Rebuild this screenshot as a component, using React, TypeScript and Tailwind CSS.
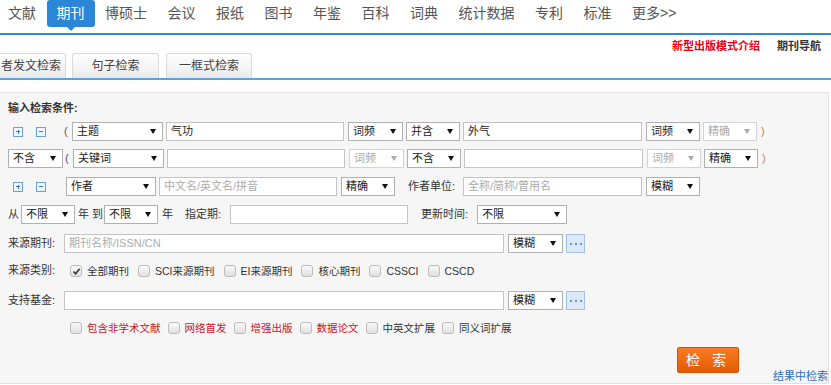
import React from "react";

const FONT = "font-['Liberation_Sans','Noto_Sans_CJK_SC',sans-serif]";

function Sel({ className = "", text, disabled = false }: { className?: string; text: string; disabled?: boolean }) {
  return (
    <div
      className={`flex h-[19px] shrink-0 items-center justify-between border bg-white pl-[4px] pr-[6px] ${
        disabled ? "border-[#d4d4d4] text-[#a9a9a9]" : "border-[#b0b0b0] text-[#222]"
      } ${className}`}
    >
      <span className="text-[11px] leading-[17px]">{text}</span>
      <svg width="6" height="5" viewBox="0 0 6 5">
        <path d="M0 0h6L3 5z" fill={disabled ? "#a9a9a9" : "#111"} />
      </svg>
    </div>
  );
}

function Inp({ className = "", text = "", placeholder = "" }: { className?: string; text?: string; placeholder?: string }) {
  return (
    <div
      className={`h-[19px] shrink-0 overflow-hidden whitespace-nowrap border border-[#c4c4c4] bg-white pl-[4px] text-[11px] leading-[17px] ${
        text ? "text-[#222]" : "text-[#ababab]"
      } ${className}`}
    >
      {text || placeholder}
    </div>
  );
}

function PlusMinus({ plus, className = "" }: { plus: boolean; className?: string }) {
  return (
    <div className={`relative h-[10px] w-[10px] shrink-0 border border-[#6b9fd6] bg-[#eef5fc] ${className}`}>
      <div className="absolute left-[2px] top-[3.5px] h-px w-[4px] bg-[#3b78c2]" />
      {plus && <div className="absolute left-[3.5px] top-[2px] h-[4px] w-px bg-[#3b78c2]" />}
    </div>
  );
}

function Dots({ className = "" }: { className?: string }) {
  return (
    <div
      className={`flex h-[19px] w-[19px] shrink-0 items-center justify-center gap-[3px] border border-[#9fc2e8] bg-[#dde9f8] ${className}`}
    >
      <span className="h-[2px] w-[2px] bg-[#5f9bd8]" />
      <span className="h-[2px] w-[2px] bg-[#5f9bd8]" />
      <span className="h-[2px] w-[2px] bg-[#5f9bd8]" />
    </div>
  );
}

function Check({ checked = false }: { checked?: boolean }) {
  return (
    <div className="relative h-[12px] w-[12px] shrink-0 rounded-[3px] border border-[#bcbcbc] bg-gradient-to-b from-[#fafafa] to-[#e0e0e0]">
      {checked && (
        <svg className="absolute left-[1px] top-[1px]" width="9" height="9" viewBox="0 0 9 9">
          <path d="M1.5 4.5L3.6 6.8L7.6 1.8" fill="none" stroke="#333" strokeWidth="1.6" />
        </svg>
      )}
    </div>
  );
}

function CItem({ label, checked = false, red = false, wide = false }: { label: string; checked?: boolean; red?: boolean; wide?: boolean }) {
  return (
    <div className={`flex items-center ${wide ? "mr-[9px]" : "mr-[7px]"}`}>
      <Check checked={checked} />
      <span className={`ml-[5px] whitespace-nowrap text-[10.5px] leading-[14px] ${red ? "text-[#c9161d]" : "text-[#333]"}`}>
        {label}
      </span>
    </div>
  );
}

const navItems = ["文献", "期刊", "博硕士", "会议", "报纸", "图书", "年鉴", "百科", "词典", "统计数据", "专利", "标准", "更多>>"];

export default function App() {
  return (
    <div className={`h-[385px] w-[831px] overflow-hidden bg-white ${FONT}`}>
      {/* top nav */}
      <div className="flex h-[35px] items-start border-b-2 border-[#2f88dd]">
        <div className="ml-[-2px] flex items-start gap-[0.5px]">
          {navItems.map((n) =>
            n === "期刊" ? (
              <div key={n} className="relative rounded-[3px] bg-[#2b86d8] px-[10px] text-[14px] leading-[27px] text-white">
                {n}
                <div className="absolute left-1/2 top-[27px] ml-[-4px] h-0 w-0 border-x-[4px] border-t-[4px] border-x-transparent border-t-[#2b86d8]" />
              </div>
            ) : (
              <div key={n} className="whitespace-nowrap px-[10px] text-[14px] leading-[27px] text-[#555]">
                {n}
              </div>
            )
          )}
        </div>
      </div>

      {/* sub tabs */}
      <div className="flex h-[45px] border-b-2 border-[#5aa2e6]">
        <div className="flex items-end">
          <div className="ml-[-20px] h-[25px] w-[86px] whitespace-nowrap rounded-t-[3px] border border-b-0 border-[#dadada] bg-gradient-to-b from-[#ffffff] to-[#ebebeb] pl-[20px] text-left text-[12px] leading-[24px] text-[#444]">
            者发文检索
          </div>
          <div className="ml-[6px] h-[25px] w-[87px] rounded-t-[3px] border border-b-0 border-[#dadada] bg-gradient-to-b from-[#ffffff] to-[#ebebeb] text-center text-[12px] leading-[24px] text-[#444]">
            句子检索
          </div>
          <div className="ml-[7px] h-[25px] w-[86px] rounded-t-[3px] border border-b-0 border-[#dadada] bg-gradient-to-b from-[#ffffff] to-[#ebebeb] text-center text-[12px] leading-[24px] text-[#444]">
            一框式检索
          </div>
        </div>
        <div className="ml-auto mr-[10px] flex items-start gap-[17px] pt-[4px] text-[11px] font-bold leading-[14px]">
          <span className="text-[#e60012]">新型出版模式介绍</span>
          <span className="text-[#333]">期刊导航</span>
        </div>
      </div>

      {/* form panel */}
      <div className="ml-[-1px] mt-[12px] w-[830px] border border-[#e2e2e2] bg-[#f6f6f6] text-[11px] text-[#333]">
        <div className="pl-[8px] pt-[7px] text-[11px] font-bold leading-[16px] text-[#333]">输入检索条件:</div>

        {/* row 1 */}
        <div className="mt-[6px] flex h-[19px] items-center">
          <PlusMinus plus className="ml-[13px]" />
          <PlusMinus plus={false} className="ml-[13px]" />
          <span className="ml-[18px] w-[8px] text-[#555]">(</span>
          <Sel className="w-[91px]" text="主题" />
          <Inp className="ml-[3px] w-[178px]" text="气功" />
          <Sel className="ml-[4px] w-[55px]" text="词频" />
          <Sel className="ml-[3px] w-[54px]" text="并含" />
          <Inp className="ml-[3px] w-[179px]" text="外气" />
          <Sel className="ml-[4px] w-[54px]" text="词频" />
          <Sel className="ml-[3px] w-[54px]" text="精确" disabled />
          <span className="ml-[4px] text-[#c9843f]">)</span>
        </div>

        {/* row 2 */}
        <div className="mt-[8px] flex h-[19px] items-center">
          <Sel className="ml-[8px] w-[55px]" text="不含" />
          <span className="ml-[2px] w-[8px] text-[#555]">(</span>
          <Sel className="w-[91px]" text="关键词" />
          <Inp className="ml-[3px] w-[178px]" />
          <Sel className="ml-[4px] w-[55px]" text="词频" disabled />
          <Sel className="ml-[3px] w-[54px]" text="不含" />
          <Inp className="ml-[3px] w-[179px]" />
          <Sel className="ml-[4px] w-[54px]" text="词频" disabled />
          <Sel className="ml-[3px] w-[54px]" text="精确" />
          <span className="ml-[4px] text-[#c9843f]">)</span>
        </div>

        {/* row 3 */}
        <div className="mt-[9px] flex h-[19px] items-center">
          <PlusMinus plus className="ml-[13px]" />
          <PlusMinus plus={false} className="ml-[13px]" />
          <Sel className="ml-[20px] w-[90px]" text="作者" />
          <Inp className="ml-[3px] w-[178px]" placeholder="中文名/英文名/拼音" />
          <Sel className="ml-[4px] w-[54px]" text="精确" />
          <span className="ml-[13px] w-[55px] whitespace-nowrap">作者单位:</span>
          <Inp className="w-[179px]" placeholder="全称/简称/曾用名" />
          <Sel className="ml-[4px] w-[54px]" text="模糊" />
        </div>

        {/* row 4 */}
        <div className="mt-[9px] flex h-[19px] items-center">
          <span className="ml-[8px] w-[13px]">从</span>
          <Sel className="w-[54px]" text="不限" />
          <span className="ml-[3px] w-[26px] whitespace-nowrap">年 到</span>
          <Sel className="w-[54px]" text="不限" />
          <span className="ml-[4px] w-[23px]">年</span>
          <span className="w-[45px] whitespace-nowrap">指定期:</span>
          <Inp className="w-[178px]" />
          <span className="ml-[13px] w-[56px] whitespace-nowrap">更新时间:</span>
          <Sel className="w-[90px]" text="不限" />
        </div>

        {/* row 5 */}
        <div className="mt-[10px] flex h-[19px] items-center">
          <span className="ml-[8px] w-[56px] whitespace-nowrap">来源期刊:</span>
          <Inp className="w-[440px]" placeholder="期刊名称/ISSN/CN" />
          <Sel className="ml-[4px] w-[55px]" text="模糊" />
          <Dots className="ml-[3px]" />
        </div>

        {/* row 6 */}
        <div className="mt-[8px] flex h-[19px] items-center">
          <span className="ml-[8px] w-[62px] whitespace-nowrap">来源类别:</span>
          <CItem label="全部期刊" checked wide />
          <CItem label="SCI来源期刊" wide />
          <CItem label="EI来源期刊" wide />
          <CItem label="核心期刊" wide />
          <CItem label="CSSCI" wide />
          <CItem label="CSCD" wide />
        </div>

        {/* row 7 */}
        <div className="mt-[11px] flex h-[19px] items-center">
          <span className="ml-[8px] w-[56px] whitespace-nowrap">支持基金:</span>
          <Inp className="w-[440px]" />
          <Sel className="ml-[4px] w-[55px]" text="模糊" />
          <Dots className="ml-[3px]" />
        </div>

        {/* row 8 */}
        <div className="mt-[8px] flex h-[19px] items-center pl-[70px]">
          <CItem label="包含非学术文献" red />
          <CItem label="网络首发" red />
          <CItem label="增强出版" red />
          <CItem label="数据论文" red />
          <CItem label="中英文扩展" />
          <CItem label="同义词扩展" />
        </div>

        {/* button row */}
        <div className="mt-[10px] flex h-[36px] items-start">
          <div className="ml-[677px] h-[26px] w-[66px] rounded-[2px] border border-[#d35400] bg-gradient-to-b from-[#f87c22] to-[#e35a00] text-center text-[14px] leading-[24px] tracking-[4px] text-white">
            检 索
          </div>
          <span className="ml-[34px] mt-[22px] whitespace-nowrap text-[11px] leading-[14px] text-[#2e6fb7]">结果中检索</span>
        </div>
      </div>
    </div>
  );
}
